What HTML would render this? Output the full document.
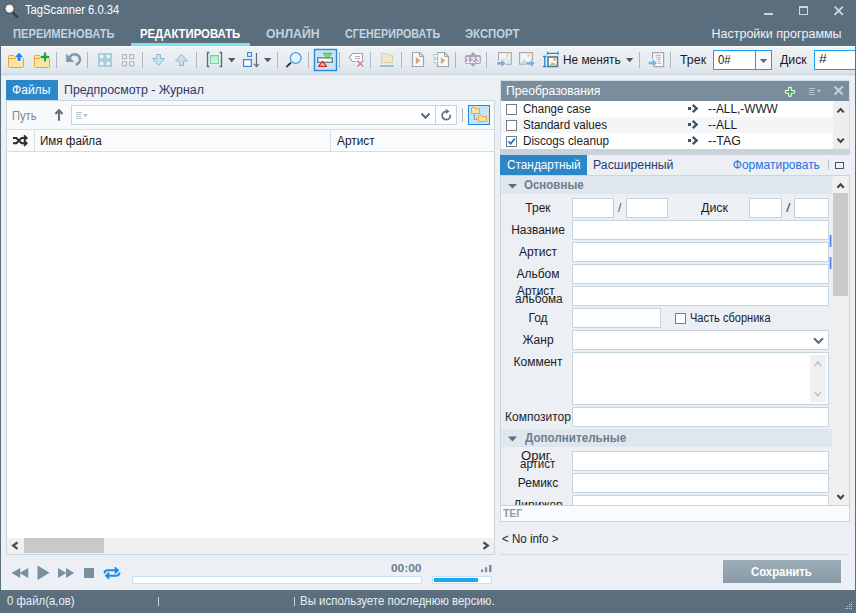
<!DOCTYPE html>
<html><head><meta charset="utf-8">
<style>
*{box-sizing:border-box;margin:0;padding:0}
html,body{width:856px;height:613px;overflow:hidden;background:#eceff4;font-family:"Liberation Sans",sans-serif;}
.a{position:absolute}
.t{position:absolute;white-space:nowrap;line-height:1;font-size:12px;color:#1b1b24;transform-origin:0 0}
.sep{position:absolute;width:1px;background:#a9b8c4}
.inp{position:absolute;background:#fff;border:1px solid #c6d4dd}
.lbl{position:absolute;white-space:nowrap;line-height:1;font-size:12px;color:#1b1b24;text-align:center;width:68px;left:504px}
svg{position:absolute;overflow:visible}
</style></head><body>
<!-- window frame -->
<div class="a" style="left:0;top:0;width:856px;height:46px;background:#5b6e7e"></div>
<div class="a" style="left:0;top:46px;width:1px;height:544px;background:#5b6e7e"></div>
<div class="a" style="left:855px;top:46px;width:1px;height:544px;background:#5b6e7e"></div>
<div class="a" style="left:0;top:590px;width:856px;height:23px;background:#5b6e7e"></div>

<!-- title -->
<svg style="left:0;top:0" width="22" height="22" viewBox="0 0 22 22">
  <line x1="12.6" y1="12.4" x2="17.8" y2="17.6" stroke="#2e2e2e" stroke-width="2.1"/>
  <line x1="13.2" y1="13" x2="17.4" y2="17.2" stroke="#8a8a8a" stroke-width="0.6" stroke-dasharray="0.8 0.8"/>
  <circle cx="9.5" cy="8.6" r="4.5" fill="#f6f6f6" stroke="#3a3a3a" stroke-width="0.9"/>
  <circle cx="9.5" cy="8.6" r="3.6" fill="#fafafa" stroke="#dcdcdc" stroke-width="0.8"/>
</svg>
<!-- window controls -->
<div class="a" style="left:764px;top:13px;width:9px;height:2px;background:#c8d7e2"></div>
<div class="a" style="left:799px;top:6px;width:9px;height:9px;border:1px solid #c8d7e2;border-top-width:2px"></div>
<svg style="left:834px;top:6px" width="10" height="10" viewBox="0 0 10 10"><path d="M0.6 0.6L8.9 8.9M8.9 0.6L0.6 8.9" stroke="#c8d7e2" stroke-width="1.9"/></svg>

<!-- menu tabs -->
<div class="a" style="left:131px;top:43px;width:119px;height:3px;background:#72e6f7"></div>

<!-- toolbar -->
<div class="a" style="left:1px;top:46px;width:854px;height:29px;background:linear-gradient(#f9fbfc 0px,#f9fbfc 1px,#eef1f4 2px,#e6ebf0 18px,#dae2e9 28px);border-bottom:1px solid #c6d5dc"></div>

<div class="a" style="left:713px;top:50px;width:59px;height:20px;background:#fff;border:1px solid #1aa0f0"></div>
<div class="a" style="left:755px;top:51px;width:16px;height:18px;background:#f8f9fb;border-left:1px solid #1aa0f0"></div>
<div class="a" style="left:814px;top:50px;width:41px;height:20px;background:#fff;border:1px solid #1aa0f0;border-right:none"></div>


<!-- left panel -->
<div class="a" style="left:6px;top:80px;width:52px;height:20px;background:#2b87c8"></div>
<div class="a" style="left:6px;top:100px;width:489px;height:455px;border:1px solid #c9d6de;background:#f8f9fb"></div>
<div class="a" style="left:71px;top:105px;width:386px;height:20px;background:#fff;border:1px solid #c6d4dd"></div>
<div class="a" style="left:435px;top:105px;width:1px;height:20px;background:#c6d4dd"></div>
<div class="a" style="left:468px;top:105px;width:22px;height:20px;background:#c5e5f8;border:1px solid #2388dc"></div>
<!-- column header -->
<div class="a" style="left:7px;top:129px;width:487px;height:23px;background:#fafbfc;border-top:1px solid #d2dde4;border-bottom:1px solid #d2dde4"></div>
<div class="a" style="left:34px;top:130px;width:1px;height:21px;background:#d7e0e6"></div>
<div class="a" style="left:330px;top:130px;width:1px;height:21px;background:#d7e0e6"></div>
<div class="a" style="left:7px;top:152px;width:487px;height:386px;background:#fff"></div>
<!-- h scrollbar -->
<div class="a" style="left:7px;top:538px;width:487px;height:16px;background:#f0f0f0"></div>
<div class="a" style="left:24px;top:538px;width:80px;height:15px;background:#c9c9c9"></div>

<!-- player -->
<div class="a" style="left:132px;top:576px;width:290px;height:8px;background:#fff;border:1px solid #bfe3f8"></div>
<div class="a" style="left:432px;top:576px;width:60px;height:8px;background:#fff;border:1px solid #bfe3f8"></div>
<div class="a" style="left:434px;top:578px;width:44px;height:4px;background:#1fa7ee"></div>

<!-- status -->
<div class="a" style="left:158px;top:597px;width:1px;height:9px;background:#c8d4dc"></div>
<div class="a" style="left:294px;top:597px;width:1px;height:9px;background:#c8d4dc"></div>

<!-- right panel -->
<div class="a" style="left:500px;top:80px;width:350px;height:70px;border:1px solid #d3dde5;background:#fff"></div>
<div class="a" style="left:501px;top:81px;width:348px;height:20px;background:#7a8d9c"></div>
<div class="a" style="left:501px;top:101px;width:348px;height:48px;background:#fff"></div>
<div class="a" style="left:501px;top:117px;width:332px;height:16px;background:#f4f5f7"></div>
<div class="a" style="left:833px;top:101px;width:16px;height:48px;background:#eeeeee"></div>
<div class="a" style="left:500px;top:149px;width:350px;height:6px;background:#c8d3dc"></div>
<div class="a" style="left:506px;top:104px;width:11px;height:11px;border:1px solid #737d85;background:#fff"></div>
<div class="a" style="left:506px;top:120px;width:11px;height:11px;border:1px solid #737d85;background:#fff"></div>
<div class="a" style="left:506px;top:136px;width:11px;height:11px;border:1px solid #737d85;background:#fff"></div>

<div class="a" style="left:500px;top:155px;width:87px;height:20px;background:#2b87c8"></div>
<div class="a" style="left:835px;top:162px;width:9px;height:7px;border:1px solid #46566a"></div>

<!-- form frame -->
<div class="a" style="left:500px;top:175px;width:350px;height:347px;border:1px solid #c9d6de;background:#eceff4"></div>
<div class="a" style="left:501px;top:176px;width:331px;height:18px;background:#dfe6ed"></div>
<div class="a" style="left:501px;top:429px;width:331px;height:18px;background:#dfe6ed"></div>
<!-- form scrollbar -->
<div class="a" style="left:833px;top:176px;width:16px;height:329px;background:#f0f0f0"></div>
<div class="a" style="left:833px;top:193px;width:15px;height:103px;background:#c9c9c9"></div>

<div class="lbl" style="top:202px">Трек</div>
<div class="inp" style="left:572px;top:198px;width:42px;height:20px"></div>
<div class="inp" style="left:626px;top:198px;width:42px;height:20px"></div>
<div class="inp" style="left:749px;top:198px;width:33px;height:20px"></div>
<div class="inp" style="left:794px;top:198px;width:35px;height:20px"></div>

<div class="lbl" style="top:224px">Название</div>
<div class="inp" style="left:572px;top:220px;width:257px;height:20px"></div>
<div class="lbl" style="top:246px">Артист</div>
<div class="inp" style="left:572px;top:242px;width:257px;height:20px"></div>
<div class="lbl" style="top:268px">Альбом</div>
<div class="inp" style="left:572px;top:264px;width:257px;height:20px"></div>
<div class="inp" style="left:572px;top:286px;width:257px;height:20px"></div>
<div class="lbl" style="top:312px">Год</div>
<div class="inp" style="left:572px;top:308px;width:89px;height:20px"></div>
<div class="a" style="left:675px;top:313px;width:11px;height:11px;border:1px solid #737d85;background:#fff"></div>
<div class="lbl" style="top:334px">Жанр</div>
<div class="inp" style="left:572px;top:330px;width:257px;height:20px"></div>
<div class="lbl" style="top:356px">Коммент</div>
<div class="inp" style="left:572px;top:352px;width:257px;height:53px"></div>
<div class="a" style="left:810px;top:355px;width:16px;height:47px;background:#f0f0f0"></div>
<div class="lbl" style="top:411px">Композитор</div>
<div class="inp" style="left:572px;top:407px;width:257px;height:20px"></div>

<div class="inp" style="left:572px;top:451px;width:257px;height:20px"></div>
<div class="lbl" style="top:477px">Ремикс</div>
<div class="inp" style="left:572px;top:473px;width:257px;height:20px"></div>
<div style="position:absolute;left:502px;top:495px;width:330px;height:10px;overflow:hidden">
  <div class="lbl" style="left:2px;top:4px">Дирижер</div>
  <div class="inp" style="left:70px;top:0;width:257px;height:20px"></div>
</div>
<div class="a" style="left:500px;top:505px;width:350px;height:17px;background:#fafbfd;border:1px solid #c9d6de"></div>

<div class="a" style="left:500px;top:554px;width:350px;height:1px;background:#d3dede"></div>
<div class="a" style="left:723px;top:560px;width:118px;height:23px;background:linear-gradient(#9cadb8,#899ba7)"></div>
<div class="t" style="left:25.00px;top:4.40px;font-size:12px;color:#ffffff;transform:scaleX(0.9356);">TagScanner 6.0.34</div>
<div class="t" style="left:13.47px;top:27.90px;font-size:12px;color:#c3d3df;font-weight:700;transform:scaleX(0.9287);">ПЕРЕИМЕНОВАТЬ</div>
<div class="t" style="left:140.16px;top:27.90px;font-size:12px;color:#ffffff;font-weight:700;transform:scaleX(0.9448);">РЕДАКТИРОВАТЬ</div>
<div class="t" style="left:266.00px;top:27.90px;font-size:12px;color:#c3d3df;font-weight:700;transform:scaleX(1.0231);">ОНЛАЙН</div>
<div class="t" style="left:344.90px;top:27.90px;font-size:12px;color:#c3d3df;font-weight:700;transform:scaleX(0.8972);">СГЕНЕРИРОВАТЬ</div>
<div class="t" style="left:464.75px;top:27.90px;font-size:12px;color:#c3d3df;font-weight:700;transform:scaleX(0.9474);">ЭКСПОРТ</div>
<div class="t" style="left:711.50px;top:27.80px;font-size:12.5px;color:#eef3f6;">Настройки программы</div>
<div class="t" style="left:562.51px;top:54.00px;font-size:12px;color:#1b1b24;transform:scaleX(0.9860);">Не менять</div>
<div class="t" style="left:680.30px;top:53.80px;font-size:12px;color:#1b1b24;transform:scaleX(1.0320);">Трек</div>
<div class="t" style="left:718.00px;top:53.80px;font-size:12px;color:#1b1b24;transform:scaleX(0.9462);">0#</div>
<div class="t" style="left:780.20px;top:53.60px;font-size:12px;color:#1b1b24;transform:scaleX(1.0231);">Диск</div>
<div class="t" style="left:818.90px;top:52.90px;font-size:12px;color:#1b1b24;transform:scaleX(1.1500);">#</div>
<div class="t" style="left:12.29px;top:83.70px;font-size:12px;color:#ffffff;transform:scaleX(1.0054);">Файлы</div>
<div class="t" style="left:63.97px;top:83.70px;font-size:12px;color:#2c3a6e;transform:scaleX(1.0299);">Предпросмотр - Журнал</div>
<div class="t" style="left:11.67px;top:109.60px;font-size:12px;color:#7c8791;transform:scaleX(0.9280);">Путь</div>
<div class="t" style="left:40.43px;top:134.90px;font-size:12px;color:#1b1b24;transform:scaleX(0.9683);">Имя файла</div>
<div class="t" style="left:337.20px;top:135.00px;font-size:12px;color:#1b1b24;transform:scaleX(0.9895);">Артист</div>
<div class="t" style="left:391.30px;top:563.10px;font-size:11px;color:#6b7e8d;font-weight:700;transform:scaleX(1.0821);">00:00</div>
<div class="t" style="left:6.80px;top:594.70px;font-size:12px;color:#e8eef2;transform:scaleX(0.9479);">0 файл(а,ов)</div>
<div class="t" style="left:300.35px;top:594.70px;font-size:12px;color:#e8eef2;transform:scaleX(0.9545);">Вы используете последнюю версию.</div>
<div class="t" style="left:506.19px;top:85.00px;font-size:12px;color:#ffffff;transform:scaleX(1.0087);">Преобразования</div>
<div class="t" style="left:523.44px;top:102.60px;font-size:12px;color:#1b1b24;transform:scaleX(0.9609);">Change case</div>
<div class="t" style="left:523.43px;top:118.60px;font-size:12px;color:#1b1b24;transform:scaleX(0.9682);">Standard values</div>
<div class="t" style="left:523.42px;top:134.60px;font-size:12px;color:#1b1b24;transform:scaleX(0.9770);">Discogs cleanup</div>
<div class="t" style="left:707.60px;top:102.60px;font-size:12px;color:#1b1b24;transform:scaleX(0.9873);">--ALL,-WWW</div>
<div class="t" style="left:707.60px;top:118.60px;font-size:12px;color:#1b1b24;transform:scaleX(0.9931);">--ALL</div>
<div class="t" style="left:707.60px;top:134.60px;font-size:12px;color:#1b1b24;transform:scaleX(1.0355);">--TAG</div>
<div class="t" style="left:506.82px;top:159.00px;font-size:12px;color:#ffffff;transform:scaleX(0.9836);">Стандартный</div>
<div class="t" style="left:593.38px;top:159.00px;font-size:12px;color:#2c3a6e;transform:scaleX(1.0247);">Расширенный</div>
<div class="t" style="left:732.80px;top:159.10px;font-size:12px;color:#1c74e6;">Форматировать</div>
<div class="t" style="left:524.40px;top:178.80px;font-size:12px;color:#6b7e8d;font-weight:700;transform:scaleX(0.9597);">Основные</div>
<div class="t" style="left:524.70px;top:432.40px;font-size:12px;color:#6b7e8d;font-weight:700;transform:scaleX(0.9702);">Дополнительные</div>
<div class="t" style="left:618.00px;top:202.00px;font-size:12px;color:#555555;">/</div>
<div class="t" style="left:701.10px;top:202.00px;font-size:12px;color:#1b1b24;transform:scaleX(1.0346);">Диск</div>
<div class="t" style="left:785.70px;top:202.00px;font-size:12px;color:#555555;transform:scaleX(1.3667);">/</div>
<div class="t" style="left:689.98px;top:312.00px;font-size:12px;color:#1b1b24;transform:scaleX(0.9209);">Часть сборника</div>
<div class="t" style="left:503.10px;top:508.80px;font-size:10px;color:#8a9bae;font-weight:700;transform:scaleX(1.0389);">ТЕГ</div>
<div class="t" style="left:502.44px;top:532.80px;font-size:12px;color:#1b1b24;transform:scaleX(0.9614);">&lt; No info &gt;</div>
<div class="t" style="left:517.10px;top:285.00px;font-size:12px;color:#1b1b24;transform:scaleX(0.9868);">Артист</div>
<div class="t" style="left:514.70px;top:293.00px;font-size:12px;color:#1b1b24;transform:scaleX(0.9854);">альбома</div>
<div class="t" style="left:521.30px;top:450.00px;font-size:12px;color:#1b1b24;transform:scaleX(1.0893);">Ориг.</div>
<div class="t" style="left:520.30px;top:458.00px;font-size:12px;color:#1b1b24;transform:scaleX(0.9568);">артист</div>
<div class="t" style="left:751.00px;top:565.90px;font-size:12px;color:#ffffff;font-weight:700;transform:scaleX(0.9453);">Сохранить</div>
<svg class="a" style="left:0;top:0" width="856" height="613" viewBox="0 0 856 613">
<!-- toolbar separators -->
<g stroke="#a9bac6" stroke-width="1">
<line x1="56.5" y1="52" x2="56.5" y2="68"/>
<line x1="87.5" y1="52" x2="87.5" y2="68"/>
<line x1="142.5" y1="52" x2="142.5" y2="68"/>
<line x1="196.5" y1="52" x2="196.5" y2="68"/>
<line x1="277.5" y1="52" x2="277.5" y2="68"/>
<line x1="308.5" y1="52" x2="308.5" y2="68"/>
<line x1="339.5" y1="52" x2="339.5" y2="68"/>
<line x1="370.5" y1="52" x2="370.5" y2="68"/>
<line x1="401.5" y1="52" x2="401.5" y2="68"/>
<line x1="455.5" y1="52" x2="455.5" y2="68"/>
<line x1="486.5" y1="52" x2="486.5" y2="68"/>
<line x1="639.5" y1="52" x2="639.5" y2="68"/>
<line x1="670.5" y1="52" x2="670.5" y2="68"/>
</g>
<!-- folder up -->
<path d="M8.5 56.5 Q8.5 55.5 9.5 55.5 L14 55.5 L15 57.5 L22.5 57.5 Q23.5 57.5 23.5 58.5 L23.5 66.5 Q23.5 67.5 22.5 67.5 L9.5 67.5 Q8.5 67.5 8.5 66.5 Z" fill="#fbe3a2" stroke="#e4a83c" stroke-width="1"/>
<line x1="9" y1="58.5" x2="16" y2="58.5" stroke="#e4a83c"/>
<path d="M19.05 52.6 L23.3 57.3 L20.6 57.3 L20.6 60.9 L17.5 60.9 L17.5 57.3 L14.8 57.3 Z" fill="#1b8bf0" stroke="#fff" stroke-width="1.4" paint-order="stroke"/>
<!-- folder plus -->
<path d="M34.5 56.5 Q34.5 55.5 35.5 55.5 L40 55.5 L41 57.5 L48.5 57.5 Q49.5 57.5 49.5 58.5 L49.5 66.5 Q49.5 67.5 48.5 67.5 L35.5 67.5 Q34.5 67.5 34.5 66.5 Z" fill="#fbe3a2" stroke="#e4a83c" stroke-width="1"/>
<line x1="35" y1="58.5" x2="42" y2="58.5" stroke="#e4a83c"/>
<path d="M43.8 52.6 h2.4 v3.2 h3.2 v2.4 h-3.2 v3.2 h-2.4 v-3.2 h-3.2 v-2.4 h3.2 z" fill="#22a334" stroke="#fff" stroke-width="1.2" paint-order="stroke"/>
<!-- undo -->
<path d="M69.6 58.6 A5.2 5.2 0 1 1 75.6 64.6" fill="none" stroke="#7f9bb0" stroke-width="2.7"/>
<path d="M66.1 53.6 L66.1 62 L74.3 62 Z" fill="#7f9bb0"/>
<!-- grid filled -->
<rect x="98" y="53" width="14" height="14" fill="#a9ccd9"/>
<g fill="#eef5f8">
<rect x="100" y="54.8" width="3.4" height="3.4"/><rect x="106.7" y="54.8" width="3.4" height="3.4"/>
<rect x="100" y="61.7" width="3.4" height="3.4"/><rect x="106.7" y="61.7" width="3.4" height="3.4"/>
</g>
<!-- grid outline -->
<g fill="#fff" stroke="#b3b6b9" stroke-width="1.3">
<rect x="122.6" y="54.7" width="3.8" height="3.8"/><rect x="129.8" y="54.7" width="3.8" height="3.8"/>
<rect x="122.6" y="61.8" width="3.8" height="3.8"/><rect x="129.8" y="61.8" width="3.8" height="3.8"/>
</g>
<!-- down arrow -->
<path d="M156.5 54.5 L160.5 54.5 L160.5 58.5 L164.5 58.5 L158.5 65.5 L152.5 58.5 L156.5 58.5 Z" fill="#c9e1eb" stroke="#8fbad1" stroke-width="1" stroke-linejoin="round"/>
<!-- up arrow -->
<path d="M181.4 54.5 L187.5 61 L183.5 61 L183.5 65.5 L179.5 65.5 L179.5 61 L175.5 61 Z" fill="#c9e1eb" stroke="#8fbad1" stroke-width="1" stroke-linejoin="round"/>
<!-- bracket -->
<path d="M209.5 52.5 L207.5 52.5 L207.5 66.5 L209.5 66.5 M219.5 52.5 L221.5 52.5 L221.5 66.5 L219.5 66.5" fill="none" stroke="#5b6e7e" stroke-width="1.4"/>
<defs><linearGradient id="gg" x1="0" y1="0" x2="0" y2="1"><stop offset="0" stop-color="#a8ecc0"/><stop offset="1" stop-color="#d8f8e4"/></linearGradient></defs>
<rect x="210.5" y="55.5" width="8" height="8" fill="url(#gg)" stroke="#72d496" stroke-width="1"/>
<path d="M228 58 L235.5 58 L231.75 62.2 Z" fill="#4b5b69"/>
<!-- sort -->
<rect x="247.6" y="52.6" width="3.8" height="3.8" fill="#fff" stroke="#3a8bea" stroke-width="1.2"/>
<rect x="243.6" y="59.6" width="7.8" height="6.8" fill="#fff" stroke="#3a8bea" stroke-width="1.3"/>
<path d="M256.5 53 L256.5 66.5 M254 63.8 L256.5 66.5 L259 63.8" fill="none" stroke="#5b6e7e" stroke-width="1.2"/>
<path d="M264 58 L271.5 58 L267.75 62.2 Z" fill="#4b5b69"/>
<!-- magnifier -->
<line x1="291" y1="62.5" x2="286.3" y2="67.2" stroke="#333" stroke-width="1.8"/>
<circle cx="295.7" cy="58" r="5.4" fill="#e6f3fb" stroke="#4b9be8" stroke-width="1.3"/>
<!-- highlighted button -->
<rect x="314.5" y="49.5" width="22" height="21" fill="#c5e5f8" stroke="#2b8ad8" stroke-width="1.4"/>
<path d="M323.2 53.2 L331.8 53.2 L327.5 58.5 Z" fill="#74e274" stroke="#44b044" stroke-width="0.9" stroke-linejoin="round"/>
<rect x="317.7" y="57.9" width="14.6" height="4.4" fill="#fff" stroke="#6a7a88" stroke-width="1.3"/>
<path d="M318.5 66.4 L326.6 66.4 L322.55 61.3 Z" fill="#f9c081" stroke="#e02424" stroke-width="1.1" stroke-linejoin="round"/>
<!-- tag delete -->
<path d="M352.5 53.5 L362.5 53.5 L362.5 61.5 L352.5 61.5 L349.5 57.5 Z" fill="#fff" stroke="#a3a5ab" stroke-width="1.2" stroke-linejoin="round"/>
<path d="M355 56.5 H360 M355 58.6 H360" stroke="#b8a2d2" stroke-width="1"/>
<path d="M357.3 60.6 L363.3 66.6 M363.3 60.6 L357.3 66.6" stroke="#fff" stroke-width="3.4"/>
<path d="M357.3 60.6 L363.3 66.6 M363.3 60.6 L357.3 66.6" stroke="#c98a92" stroke-width="1.8"/>
<!-- faded folder -->
<path d="M381.5 54 Q381.5 53.5 382 53.5 L386.5 53.5 L387.5 55 L392 55 Q392.5 55 392.5 55.5 L392.5 62.5 L381.5 62.5 Z" fill="#eee7d4" stroke="#dccda6" stroke-width="1"/>
<rect x="379.5" y="64.5" width="15" height="3" fill="#99c1d1" stroke="#fff" stroke-width="0.6"/>
<!-- file 1 -->
<path d="M412.5 52.5 L419.5 52.5 L423.5 56.5 L423.5 66.5 L412.5 66.5 Z" fill="#f8f8f8" stroke="#a2a6aa" stroke-width="1.2" stroke-linejoin="round"/>
<path d="M419.5 52.5 L419.5 56.5 L423.5 56.5" fill="none" stroke="#a2a6aa" stroke-width="1"/>
<path d="M415.8 57 L420.4 60.6 L415.8 64.3 Z" fill="#d9a283"/>
<!-- file 2 -->
<path d="M437.5 52.5 L444.5 52.5 L448.5 56.5 L448.5 66.5 L437.5 66.5 Z" fill="#f8f8f8" stroke="#a2a6aa" stroke-width="1.2" stroke-linejoin="round"/>
<path d="M444.5 52.5 L444.5 56.5 L448.5 56.5" fill="none" stroke="#a2a6aa" stroke-width="1"/>
<rect x="434" y="54.4" width="3.6" height="3.3" fill="#fff" stroke="#a3cbdb" stroke-width="1"/>
<rect x="434" y="59.4" width="3.6" height="3.3" fill="#fff" stroke="#a3cbdb" stroke-width="1"/>
<path d="M440.8 57 L445.2 60.6 L440.8 64.3 Z" fill="#d9a283"/>
<!-- 123 -->
<path d="M470.3 54.9 L473 52.1 L475.7 54.9 Z M470.3 63.9 L473 66.8 L475.7 63.9 Z" fill="#a0a4a8"/>
<rect x="464.8" y="54.9" width="16.2" height="9" rx="2" fill="#b1a1c3"/>
<text x="473" y="62.5" font-family="Liberation Sans" font-weight="bold" font-size="8.2" letter-spacing="0.4" fill="#fff" text-anchor="middle">123</text>
<!-- image import 1 -->
<rect x="498.6" y="52.6" width="12.6" height="11.6" fill="#f4f5f6" stroke="#a8acb0" stroke-width="1.2"/>
<circle cx="507.5" cy="55.5" r="1.4" fill="#e2d3ad"/>
<path d="M502.5 58.5 L508.5 63 M505 57.5 L510 61.5" stroke="#b8dcc8" stroke-width="1"/>
<path d="M497 61.9 L501.3 61.9 L501.3 59.2 L505.6 63.3 L501.3 67.4 L501.3 64.7 L497 64.7 Z" fill="#82b1d8" stroke="#fff" stroke-width="1.1" paint-order="stroke" stroke-linejoin="round"/>
<!-- image export 2 -->
<rect x="519.6" y="52.6" width="12.8" height="11.6" fill="#f4f5f6" stroke="#a8acb0" stroke-width="1.2"/>
<circle cx="528.5" cy="55.5" r="1.4" fill="#e2d3ad"/>
<path d="M521 63.5 L524.5 59 L528 63.5 Z" fill="#b8dcc8"/>
<path d="M526 61.9 L530.6 61.9 L530.6 59.2 L535 63.3 L530.6 67.4 L530.6 64.7 L526 64.7 Z" fill="#82b1d8" stroke="#fff" stroke-width="1.1" paint-order="stroke" stroke-linejoin="round"/>
<!-- resize image -->
<path d="M543 56.5 H546.5 M544.75 56.5 V66.5 M543 66.5 H546.5" stroke="#1b8bea" stroke-width="1.3" fill="none"/>
<path d="M547.5 51.8 V54.8 M547.5 53.3 H558 M558 51.8 V54.8" stroke="#1b8bea" stroke-width="1.3" fill="none"/>
<rect x="548" y="57" width="9.5" height="9.5" fill="#fff" stroke="#67737d" stroke-width="1.6"/>
<circle cx="554.5" cy="59.4" r="1.5" fill="#eab25a"/>
<path d="M549.5 65.5 L552 61.8 L553.5 63.3 L554.5 62.4 L556.5 65.5 Z" fill="#8fd2b0"/>
<path d="M626 58 L633.3 58 L629.65 62.2 Z" fill="#4b5b69"/>
<path d="M759.8 59 L767.2 59 L763.5 62.9 Z" fill="#5a6a78"/>
<!-- import doc -->
<rect x="652.6" y="52.6" width="11" height="14" fill="#fafafa" stroke="#a2a6aa" stroke-width="1.2"/>
<path d="M655.5 55.3 H661 M655.5 57.3 H661 M656.5 59.3 H661 M657.5 61.3 H660 M657.5 63.3 H661" stroke="#b39ccc" stroke-width="0.9"/>
<path d="M648.5 61.6 L652.8 61.6 L652.8 59 L657 63.1 L652.8 67.2 L652.8 64.6 L648.5 64.6 Z" fill="#82b1d8" stroke="#fff" stroke-width="1.1" paint-order="stroke" stroke-linejoin="round"/>

<!-- path row icons -->
<path d="M59 109.5 L59 120.8 M55.5 114 L59 110 L62.5 114" fill="none" stroke="#5e7282" stroke-width="2.1"/>
<path d="M76 112.5 H82 M76 114.5 H81 M76 116.5 H81 M76 118.5 H82" stroke="#a8b8c4" stroke-width="0.9"/>
<path d="M83 114.2 H88 L85.5 117 Z" fill="#a8b8c4"/>
<path d="M421.5 113.5 L425.5 117.8 L429.5 113.5" fill="none" stroke="#5a6e7e" stroke-width="2"/>
<path d="M446.4 111.5 A4.1 4.1 0 1 0 450.2 114.6" fill="none" stroke="#5e7282" stroke-width="1.7"/>
<path d="M445.9 108.8 L449.5 111.4 L445.9 114 Z" fill="#5e7282"/>
<line x1="462.5" y1="108" x2="462.5" y2="122" stroke="#a9bac6"/>
<path d="M471.5 108 Q471.5 107.5 472 107.5 L474.5 107.5 L475.5 108.8 L479.5 108.8 L479.5 113.5 L471.5 113.5 Z" fill="#fbe3a2" stroke="#e4a83c" stroke-width="1"/>
<path d="M478.5 115.8 Q478.5 115.3 479 115.3 L481.5 115.3 L482.5 116.6 L486.5 116.6 L486.5 121.5 L478.5 121.5 Z" fill="#fbe3a2" stroke="#e4a83c" stroke-width="1"/>
<g fill="#6a7680"><rect x="473.8" y="114.8" width="1.2" height="1.2"/><rect x="473.8" y="116.8" width="1.2" height="1.2"/><rect x="473.8" y="118.8" width="1.2" height="1.2"/><rect x="475.8" y="118.8" width="1.2" height="1.2"/></g>
<!-- shuffle -->
<path d="M13 138 H16.4 L21.6 143.2 H26 M13 143.2 H16.4 L21.6 138 H26" fill="none" stroke="#2b2b2b" stroke-width="1.9" stroke-linejoin="miter"/>
<path d="M24 135.4 L26.6 138 L24 140.6 M24 140.6 L26.6 143.2 L24 145.8" fill="none" stroke="#2b2b2b" stroke-width="1.9" stroke-linejoin="miter"/>
<!-- h scrollbar arrows -->
<path d="M17.5 542.3 L13.2 545.6 L17.5 548.9" fill="none" stroke="#4a4a4a" stroke-width="2.3"/>
<path d="M483.5 542.3 L487.8 545.6 L483.5 548.9" fill="none" stroke="#4a4a4a" stroke-width="2.3"/>
<!-- player -->
<g fill="#7a8f9e">
<path d="M11.6 573 L20.2 567.9 L20.2 578.1 Z M19.5 573 L28.3 567.9 L28.3 578.1 Z"/>
<path d="M37.5 565.6 L49.6 572.8 L37.5 580 Z"/>
<path d="M58 567.9 L66.2 573 L58 578.1 Z M66 567.9 L74.2 573 L66 578.1 Z"/>
<rect x="84" y="568" width="10" height="10"/>
</g>
<path d="M104.5 573.5 Q104.5 570.3 108 570.3 H117.5 M114.8 567.4 L117.8 570.3 L114.8 573.2 M119.5 572.5 Q119.5 575.7 116 575.7 H106.5 M109.2 572.8 L106.2 575.7 L109.2 578.6" fill="none" stroke="#1a8ae0" stroke-width="1.9"/>
<g fill="#7a8f9e"><rect x="481" y="569.5" width="2.2" height="2.6"/><rect x="485" y="567.3" width="2.2" height="4.8"/><rect x="489" y="565" width="2.5" height="7.1"/></g>
<!-- right header icons -->
<path d="M788.7 87.3 h2.6 v3.2 h3.4 v2.6 h-3.4 v3.2 h-2.6 v-3.2 h-3.4 v-2.6 h3.4 z" fill="#3cae4a" stroke="#fff" stroke-width="1"/>
<path d="M809 88.5 H815 M809 90.5 H814 M809 92.5 H814 M809 94.5 H815" stroke="#b2c2ce" stroke-width="1.1"/>
<path d="M816.4 89.8 H821.4 L818.9 92.8 Z" fill="#b2c2ce"/>
<path d="M834.5 86.5 L842.8 94.6 M842.8 86.5 L834.5 94.6" stroke="#c3d2dc" stroke-width="2"/>
<!-- list arrows -->
<g fill="#3e5262"><rect x="688" y="107" width="3" height="3"/><rect x="688" y="123" width="3" height="3"/><rect x="688" y="139" width="3" height="3"/></g>
<path d="M692.8 104.8 L696.6 108.5 L692.8 112.2 M692.8 120.8 L696.6 124.5 L692.8 128.2 M692.8 136.8 L696.6 140.5 L692.8 144.2" fill="none" stroke="#3e5262" stroke-width="2.4"/>
<path d="M837.4 112.4 L840.6 109 L843.8 112.4" fill="none" stroke="#444" stroke-width="2.1"/>
<path d="M837.4 138.6 L840.6 142 L843.8 138.6" fill="none" stroke="#444" stroke-width="2.1"/>
<path d="M508.2 125.5 L510.5 128 L515 122.5" fill="none" stroke="#fff" stroke-width="0"/>
<path d="M508.4 141.3 L510.7 143.7 L514.8 138.6" fill="none" stroke="#2a72c0" stroke-width="1.8"/>
<line x1="828.5" y1="159.5" x2="828.5" y2="170" stroke="#b6c3cc"/>
<!-- section triangles -->
<path d="M508 184 L517 184 L512.5 188.5 Z" fill="#5b6e7e"/>
<path d="M508 436.5 L517 436.5 L512.5 441.5 Z" fill="#5b6e7e"/>
<!-- form scroll arrows -->
<path d="M837.4 187.8 L840.6 184.4 L843.8 187.8" fill="none" stroke="#444" stroke-width="2.1"/>
<path d="M837.4 495 L840.6 498.4 L843.8 495" fill="none" stroke="#444" stroke-width="2.2"/>
<!-- blue marks -->
<rect x="829.7" y="235" width="1.7" height="12" fill="#4a7af0"/>
<rect x="829.7" y="257" width="1.7" height="12" fill="#4a7af0"/>
<!-- genre chevron -->
<path d="M814 338.2 L818.5 342.8 L823 338.2" fill="none" stroke="#5a6e7e" stroke-width="2"/>
<!-- comment scroll chevrons -->
<path d="M814.5 366.2 L817.8 362 L821.1 366.2" fill="none" stroke="#c2c2c2" stroke-width="1.5"/>
<path d="M814.5 391.6 L817.8 395.8 L821.1 391.6" fill="none" stroke="#c2c2c2" stroke-width="1.5"/>
<!-- grip -->
<g fill="#c5d0d8"><rect x="851" y="602" width="1" height="1"/><rect x="849" y="604" width="1" height="1"/><rect x="851" y="604" width="1" height="1"/><rect x="847" y="606" width="1" height="1"/><rect x="849" y="606" width="1" height="1"/><rect x="851" y="606" width="1" height="1"/><rect x="845" y="608" width="1" height="1"/><rect x="847" y="608" width="1" height="1"/><rect x="849" y="608" width="1" height="1"/><rect x="851" y="608" width="1" height="1"/></g>
</svg>
</body></html>
